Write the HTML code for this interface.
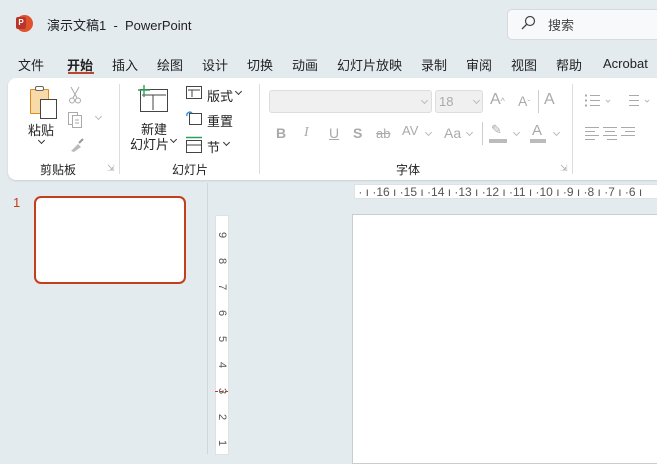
<!DOCTYPE html><html><head><meta charset="utf-8"><style>
*{margin:0;padding:0;box-sizing:border-box}
body{width:657px;height:454px;overflow:hidden;background:#e4ebef;font-family:"Liberation Sans","Noto Sans CJK SC",sans-serif;position:relative;color:#222}
.a{position:absolute;white-space:nowrap}
.t{font-size:13px}
.g{color:#aaa}
.ch{position:absolute;width:5px;height:5px;border-right:1px solid #999;border-bottom:1px solid #999;transform:rotate(45deg)}
</style></head><body>
<!-- title -->
<div class="a" style="left:16px;top:15px;width:17px;height:17px;border-radius:50%;background:#e0522c"></div>
<div class="a" style="left:16px;top:17px;width:10px;height:12px;background:#b7352a;border-radius:2px;color:#fff;font-size:8px;font-weight:bold;text-align:center;line-height:12px">P</div>
<div class="a t" style="left:47px;top:15px">演示文稿1 &nbsp;- &nbsp;PowerPoint</div>
<div class="a" style="left:507px;top:9px;width:160px;height:31px;background:#f7f9fa;border:1px solid #d5dadd;border-radius:5px"></div>
<svg class="a" style="left:520px;top:15px" width="16" height="16"><circle cx="10" cy="6" r="4.5" fill="none" stroke="#444" stroke-width="1.2"/><path d="M7 9L2 14" stroke="#444" stroke-width="1.3"/></svg>
<div class="a t" style="left:548px;top:15px;color:#444">搜索</div>
<!-- tabs -->
<div class="a t" style="left:18px;top:55px">文件</div>
<div class="a t" style="left:67px;top:55px;font-weight:bold">开始</div>
<div class="a" style="left:68px;top:72px;width:26px;height:2px;background:#b7472a"></div>
<div class="a t" style="left:112px;top:55px">插入</div>
<div class="a t" style="left:157px;top:55px">绘图</div>
<div class="a t" style="left:202px;top:55px">设计</div>
<div class="a t" style="left:247px;top:55px">切换</div>
<div class="a t" style="left:292px;top:55px">动画</div>
<div class="a t" style="left:337px;top:55px">幻灯片放映</div>
<div class="a t" style="left:421px;top:55px">录制</div>
<div class="a t" style="left:466px;top:55px">审阅</div>
<div class="a t" style="left:511px;top:55px">视图</div>
<div class="a t" style="left:556px;top:55px">帮助</div>
<div class="a t" style="left:603px;top:56px;line-height:15px">Acrobat</div>
<!-- ribbon -->
<div class="a" style="left:8px;top:78px;width:670px;height:102px;background:#fff;border-radius:8px;box-shadow:0 1px 2px rgba(0,0,0,.12)"></div>
<div class="a" style="left:119px;top:84px;width:1px;height:90px;background:#ddd"></div>
<div class="a" style="left:259px;top:84px;width:1px;height:90px;background:#ddd"></div>
<div class="a" style="left:572px;top:84px;width:1px;height:90px;background:#ddd"></div>
<!-- paste -->
<div class="a" style="left:30px;top:89px;width:19px;height:25px;background:#f8d9a8;border:1px solid #e08a1e;border-radius:1px"></div>
<div class="a" style="left:35px;top:86px;width:9px;height:5px;border:1px solid #666;background:#fff;border-radius:2px"></div>
<div class="a" style="left:40px;top:99px;width:17px;height:20px;background:#fff;border:1px solid #444"></div>
<div class="a t" style="left:28px;top:120px">粘贴</div>
<div class="ch" style="left:39px;top:138px;border-color:#333"></div>
<svg class="a" style="left:68px;top:86px" width="14" height="18"><path d="M3 1l6 11M11 1L5 12" stroke="#aaa"/><circle cx="4" cy="14.5" r="2.5" fill="none" stroke="#aaa"/><circle cx="10" cy="14.5" r="2.5" fill="none" stroke="#aaa"/></svg>
<svg class="a" style="left:67px;top:111px" width="18" height="18"><rect x="1.5" y="1.5" width="9" height="12" fill="none" stroke="#aaa"/><rect x="5.5" y="4.5" width="9" height="12" fill="#fff" stroke="#aaa"/><path d="M8 9h4M8 12h4" stroke="#aaa"/></svg>
<div class="ch" style="left:96px;top:114px;border-color:#bbb"></div>
<svg class="a" style="left:68px;top:137px" width="18" height="16"><path d="M3 14L10 7l3 3-7 5z" fill="#bbb"/><path d="M11 6l4-4" stroke="#999" stroke-width="2"/></svg>
<div class="a" style="left:40px;top:161px;font-size:12px">剪贴板</div>
<div class="a g" style="left:107px;top:163px;font-size:9px">⇲</div>
<!-- slides -->
<svg class="a" style="left:136px;top:84px" width="34" height="30"><rect x="4.5" y="5.5" width="27" height="22" fill="#fff" stroke="#444"/><path d="M6 11h24M17 11v15" stroke="#444"/><path d="M8 1v12M2 6h12" stroke="#2ca05a" stroke-width="1.4"/></svg>
<div class="a t" style="left:141px;top:119px">新建</div>
<div class="a t" style="left:130px;top:134px">幻灯片</div>
<div class="ch" style="left:171px;top:137px;border-color:#333"></div>
<div class="a" style="left:172px;top:161px;font-size:12px">幻灯片</div>
<svg class="a" style="left:186px;top:86px" width="16" height="14"><rect x=".5" y=".5" width="15" height="12" fill="none" stroke="#444"/><path d="M2 4h12M6 4v7" stroke="#444"/></svg>
<div class="a t" style="left:207px;top:86px">版式</div>
<div class="ch" style="left:236px;top:89px;border-color:#333"></div>
<svg class="a" style="left:186px;top:111px" width="16" height="15"><rect x="3.5" y="2.5" width="12" height="11" fill="none" stroke="#444"/><path d="M1 5a3 3 0 0 1 5-3" fill="none" stroke="#2a8ad8" stroke-width="1.3"/></svg>
<div class="a t" style="left:207px;top:111px">重置</div>
<svg class="a" style="left:186px;top:136px" width="16" height="18"><path d="M0 1.5h16" stroke="#2ca05a" stroke-width="1.5"/><rect x=".5" y="4.5" width="15" height="12" fill="none" stroke="#444"/><path d="M1 9h14" stroke="#444"/></svg>
<div class="a t" style="left:207px;top:137px">节</div>
<div class="ch" style="left:224px;top:140px;border-color:#333"></div>
<!-- font -->
<div class="a" style="left:269px;top:90px;width:163px;height:23px;background:#f0f0f0;border:1px solid #ddd;border-radius:3px"></div>
<div class="ch" style="left:422px;top:98px;border-color:#bbb"></div>
<div class="a" style="left:435px;top:90px;width:48px;height:23px;background:#f0f0f0;border:1px solid #ddd;border-radius:3px"></div>
<div class="a g" style="left:439px;top:94px;font-size:13px">18</div>
<div class="ch" style="left:474px;top:98px;border-color:#bbb"></div>
<div class="a g" style="left:490px;top:91px;font-size:16px">A<span style="font-size:9px">^</span></div>
<div class="a g" style="left:518px;top:93px;font-size:14px">A<span style="font-size:8px">ˇ</span></div>
<div class="a" style="left:538px;top:90px;width:1px;height:23px;background:#ccc"></div>
<div class="a g" style="left:544px;top:91px;font-size:16px">A</div>
<div class="a g" style="left:276px;top:125px;font-size:14px;font-weight:bold">B</div>
<div class="a g" style="left:304px;top:125px;font-size:14px;font-style:italic;font-family:'Liberation Serif'">I</div>
<div class="a g" style="left:329px;top:125px;font-size:14px;text-decoration:underline">U</div>
<div class="a g" style="left:353px;top:125px;font-size:14px;font-weight:bold">S</div>
<div class="a g" style="left:376px;top:126px;font-size:13px;text-decoration:line-through">ab</div>
<div class="a g" style="left:402px;top:123px;font-size:13px">AV</div>
<div class="ch" style="left:426px;top:130px;border-color:#bbb"></div>
<div class="a g" style="left:444px;top:125px;font-size:14px">Aa</div>
<div class="ch" style="left:467px;top:130px;border-color:#bbb"></div>
<div class="a" style="left:482px;top:122px;width:1px;height:23px;background:#ccc"></div>
<div class="a" style="left:489px;top:139px;width:18px;height:4px;background:#bbb"></div>
<div class="a g" style="left:491px;top:122px;font-size:13px">✎</div>
<div class="ch" style="left:514px;top:130px;border-color:#bbb"></div>
<div class="a" style="left:530px;top:139px;width:16px;height:4px;background:#bbb"></div>
<div class="a g" style="left:532px;top:122px;font-size:15px">A</div>
<div class="ch" style="left:554px;top:130px;border-color:#bbb"></div>
<div class="a" style="left:396px;top:161px;font-size:12px">字体</div>
<div class="a g" style="left:560px;top:163px;font-size:9px">⇲</div>
<svg class="a" style="left:584px;top:93px" width="73" height="50"><g stroke="#aaa"><path d="M6 2.5h10M6 7.5h10M6 12.5h10M45 2.5h10M45 7.5h10M45 12.5h10"/><path d="M1 2.5h2M1 7.5h2M1 12.5h2" stroke-width="2"/><path d="M1 34.5h14M1 38.5h10M1 42.5h14M1 46.5h10M19 34.5h14M21 38.5h10M19 42.5h14M23 46.5h10M37 34.5h14M41 38.5h10M37 42.5h14"/></g><path d="M22 7l2 2 2-2M61 7l2 2 2-2" stroke="#bbb" fill="none"/></svg>
<!-- left pane -->
<div class="a" style="left:207px;top:183px;width:1px;height:271px;background:#d0d6da"></div>
<div class="a" style="left:13px;top:195px;font-size:13px;color:#c43e1c">1</div>
<div class="a" style="left:34px;top:196px;width:152px;height:88px;background:#fff;border:2.5px solid #c43e1c;border-radius:7px"></div>
<!-- rulers -->
<div class="a" style="left:354px;top:184px;width:310px;height:15px;background:#fff;border:1px solid #dde2e5;font-size:12px;color:#555;line-height:14px">&nbsp;· ı ·16 ı ·15 ı ·14 ı ·13 ı ·12 ı ·11 ı ·10 ı ·9 ı ·8 ı ·7 ı ·6 ı</div>
<div class="a" style="left:215px;top:215px;width:14px;height:240px;background:#fff;border:1px solid #dde2e5"></div>
<div class="a" style="left:216px;top:222px;width:12px;font-size:11px;color:#555;line-height:26px;text-align:center">
<div style="transform:rotate(90deg)">9</div><div style="transform:rotate(90deg)">8</div><div style="transform:rotate(90deg)">7</div><div style="transform:rotate(90deg)">6</div><div style="transform:rotate(90deg)">5</div><div style="transform:rotate(90deg)">4</div><div style="transform:rotate(90deg)">3</div><div style="transform:rotate(90deg)">2</div><div style="transform:rotate(90deg)">1</div></div>
<div class="a" style="left:215px;top:391px;width:13px;border-top:1px dashed #c43e1c"></div>
<!-- slide -->
<div class="a" style="left:352px;top:214px;width:320px;height:250px;background:#fff;border:1px solid #c8cdd0"></div>
</body></html>
